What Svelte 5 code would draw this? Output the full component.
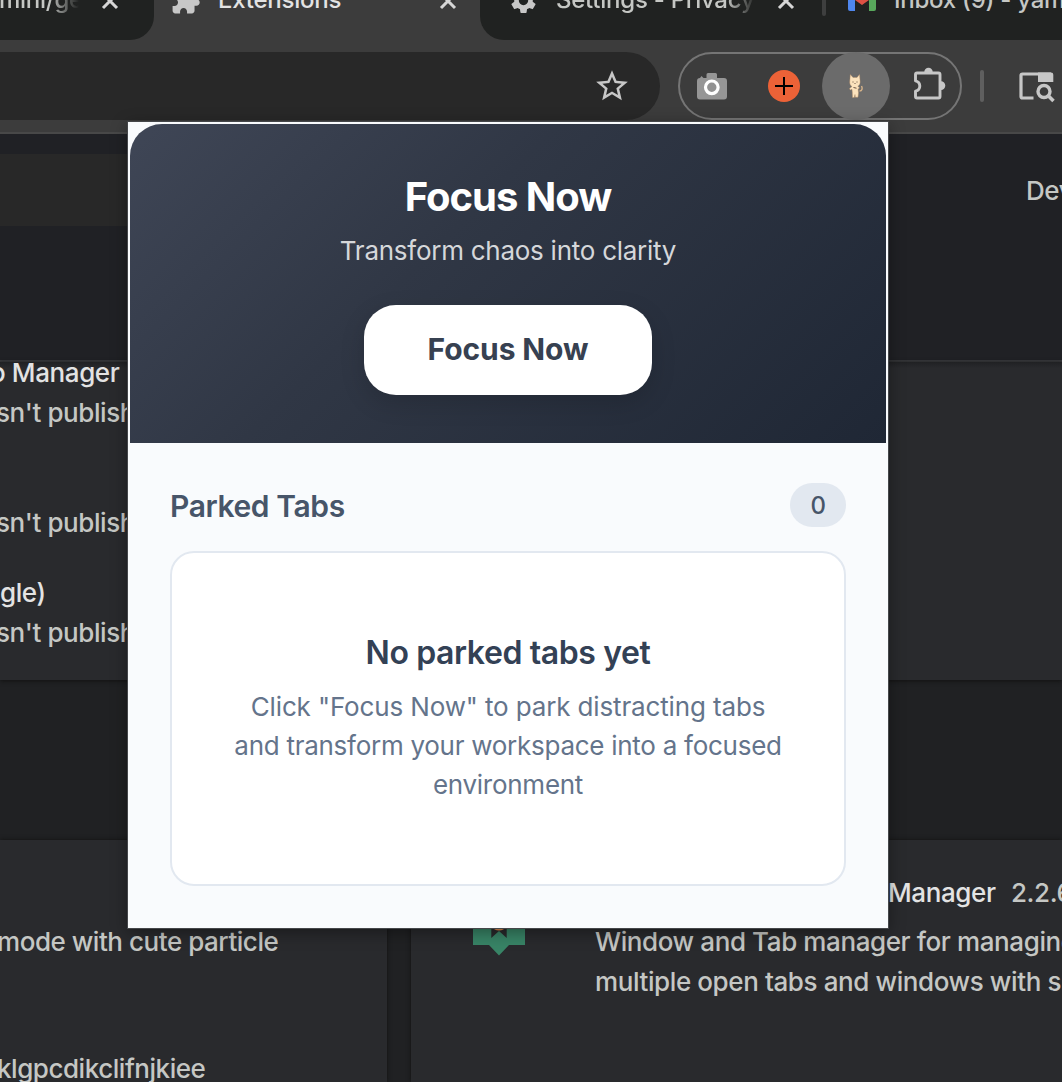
<script>
  const rows = [
    { text: 'o Manager', kind: 'name' },
    { text: "sn't publish", kind: 'desc' },
    { text: "sn't publish", kind: 'desc gap-large' },
    { text: 'gle)', kind: 'name gap-small' },
    { text: "sn't publish", kind: 'desc' }
  ];
</script>

{#snippet cross()}
  <svg class="cross" viewBox="0 0 20 20"><path d="M3 3 17 17M17 3 3 17" /></svg>
{/snippet}

<div class="screen">
  <div class="tabs">
    <div class="tab dark first">
      <span class="label fade l1">mini/ge</span>
      {@render cross()}
    </div>
    <div class="tab active">
      <svg class="tabicon" viewBox="0 0 24 24"><path d="M20.5 11H19V7c0-1.1-.9-2-2-2h-4V3.5C13 2.12 11.88 1 10.5 1S8 2.12 8 3.5V5H4c-1.1 0-1.99.9-1.99 2v3.8H3.5c1.49 0 2.7 1.21 2.7 2.7s-1.21 2.7-2.7 2.7H2V20c0 1.1.9 2 2 2h3.8v-1.5c0-1.49 1.21-2.7 2.7-2.7 1.49 0 2.7 1.21 2.7 2.7V22H17c1.1 0 2-.9 2-2v-4h1.5c1.38 0 2.5-1.12 2.5-2.5S21.88 11 20.5 11z" /></svg>
      <span class="label l2">Extensions</span>
      {@render cross()}
    </div>
    <div class="tab dark last">
      <svg class="tabicon" viewBox="0 0 24 24"><path d="M19.14 12.94c.04-.3.06-.61.06-.94 0-.32-.02-.64-.07-.94l2.03-1.58c.18-.14.23-.41.12-.61l-1.92-3.32c-.12-.22-.37-.29-.59-.22l-2.39.96c-.5-.38-1.03-.7-1.62-.94l-.36-2.54c-.04-.24-.24-.41-.48-.41h-3.84c-.24 0-.43.17-.47.41l-.36 2.54c-.59.24-1.13.57-1.62.94l-2.39-.96c-.22-.08-.47 0-.59.22L2.74 8.87c-.12.21-.08.47.12.61l2.03 1.58c-.05.3-.09.63-.09.94s.02.64.07.94l-2.03 1.58c-.18.14-.23.41-.12.61l1.92 3.32c.12.22.37.29.59.22l2.39-.96c.5.38 1.03.7 1.62.94l.36 2.54c.05.24.24.41.48.41h3.84c.24 0 .44-.17.47-.41l.36-2.54c.59-.24 1.13-.56 1.62-.94l2.39.96c.22.08.47 0 .59-.22l1.92-3.32c.12-.22.07-.47-.12-.61l-2.01-1.58zM12 15.6c-1.98 0-3.6-1.62-3.6-3.6s1.62-3.6 3.6-3.6 3.6 1.62 3.6 3.6-1.62 3.6-3.6 3.6z" /></svg>
      <span class="label fade l3">Settings - Privacy</span>
      {@render cross()}
      <i class="tabsep"></i>
      <svg class="gmail" viewBox="0 0 28 22">
        <path fill="#4f87ee" d="M0 4h7v18H2a2 2 0 0 1-2-2z" />
        <path fill="#58a85c" d="M21 4h7v16a2 2 0 0 1-2 2h-5z" />
        <path fill="#dd5144" d="M7 2l7 6 7-6v9l-7 5-7-5z" />
      </svg>
      <span class="label l4">Inbox (9) - yam</span>
    </div>
  </div>

  <div class="toolbar">
    <div class="omnibox">
      <svg viewBox="0 0 24 24"><path d="M22 9.24l-7.19-.62L12 2 9.19 8.63 2 9.24l5.46 4.73L5.82 21 12 17.27 18.18 21l-1.63-7.03L22 9.24zM12 15.4l-3.76 2.27 1-4.28-3.32-2.88 4.38-.38L12 6.1l1.71 4.04 4.38.38-3.32 2.88 1 4.28L12 15.4z" /></svg>
    </div>
    <div class="pill">
      <svg class="camera" viewBox="0 0 30 28">
        <path fill="#969696" d="M3 6 4.500 4 6.500 6h3V2.500Q9.500 1 11 1h7.500Q20 1 20 2.500V6h7q3 0 3 3v15.500q0 3-3 3H3q-3 0-3-3V9q0-3 3-3z" />
        <circle cx="14.800" cy="15.300" r="6.300" fill="#929292" stroke="#fff" stroke-width="3.200" />
      </svg>
      <svg class="plus" viewBox="0 0 32 32"><circle cx="16" cy="16" r="16" fill="#ec6237" /><path d="M16 7v18M7 16h18" stroke="#000" stroke-width="2" /></svg>
      <div class="selected">
        <svg viewBox="0 0 14 24">
          <path d="M10.500 17c3 0 3-3 2-5" fill="none" stroke="#d7b389" stroke-width="1.400" />
          <path fill="#fce3bd" stroke="#b28c62" stroke-width=".4" d="M1.300.5 4 3.500h4L10.500.5l.6 6.500c.4 3-1 4.500-2.300 5.300l1.700 1.500-1 1.200-.5-.3.500 4-.5 4.500H6.300L6 20.500l-.7 3H3.500l-.2-5.200-.3-3-1.800.8-.7-1.500L3 12.500C1 11.500.5 9.500.8 7z" />
          <path d="M3.500 8h1M7.500 8h1M5.500 9.500h1M4.500 13.500l3 .7" stroke="#594334" stroke-width=".9" />
        </svg>
      </div>
      <svg class="puzzle" viewBox="0 0 34 34"><path d="M4 6h21.500q1.500 0 1.500 1.500v22q0 1.500-1.500 1.500H4q-1.500 0-1.500-1.500V24.200c2.600-.6 4.300-2.600 4.300-5.200s-1.700-4.600-4.300-5.200V7.500Q2.500 6 4 6z" fill="none" stroke="#c7c7c7" stroke-width="2.900" stroke-linejoin="round" /><path d="M11.300 5a4.200 4.200 0 0 1 8.400 0zM28 14.300a4.300 4.300 0 0 1 0 8.600z" fill="#c7c7c7" /></svg>
    </div>
    <i class="sep"></i>
    <svg class="lens" viewBox="0 0 36 32"><path d="M14.500 26H3.500Q2 26 2 24.500v-21Q2 2 3.500 2H32" fill="none" stroke="#c7c7c7" stroke-width="3.200" /><path d="M19 .4h13q2.300 0 2.300 2.300V10H19z" fill="#c7c7c7" /><circle cx="25" cy="19.500" r="6" fill="none" stroke="#c7c7c7" stroke-width="3.400" /><path d="m29 23.500 5.500 5.500" stroke="#c7c7c7" stroke-width="3.600" /></svg>
  </div>

  <div class="pagehead">
    <div class="search"></div>
    <span class="dev">Deve</span>
  </div>

  <div class="details">
    {#each rows as row}
      <div class="row {row.kind}">{row.text}</div>
    {/each}
  </div>

  <div class="cards">
    <div class="card left">
      <p class="c1">mode with cute particle</p>
      <p class="c2">klgpcdikclifnjkiee</p>
    </div>
    <div class="card right">
      <svg viewBox="0 0 52 56"><path fill="#388466" d="M0 0h52v45H36L26 55.500 16 45H0z" /><path fill="#29292b" d="M18.300 20h15.400v18L26 31l-7.700 7z" /><ellipse cx="26" cy="27" rx="6" ry="3.600" fill="#dc8a4d" /></svg>
      <div class="info">
        <div class="head"><span class="m">Manager</span><span class="v">2.2.6</span></div>
        <p class="w1">Window and Tab manager for managing</p>
        <p class="w2">multiple open tabs and windows with s</p>
      </div>
    </div>
  </div>

  <main class="popup">
    <header>
      <h1>Focus Now</h1>
      <p>Transform chaos into clarity</p>
      <button>Focus Now</button>
    </header>
    <section>
      <div class="title"><h2>Parked Tabs</h2><b>0</b></div>
      <div class="empty">
        <h3>No parked tabs yet</h3>
        <p><span class="lead">Click "Focus Now" to park distracting tabs</span><br />and transform your workspace into a focused<br />environment</p>
      </div>
    </section>
  </main>
</div>

<style>
  :global(body) { margin: 0; overflow: hidden; }
  * { box-sizing: border-box; }
  p, h1, h2, h3 { margin: 0; }
  svg { display: block; flex: none; }
  .screen { position: relative; width: 1062px; height: 1082px; overflow: hidden; background: #202123; font-family: Inter, "Liberation Sans", sans-serif; font-size: 26px; font-weight: 450; letter-spacing: -.4px; color: #c5c7c4; white-space: nowrap; }

  .tabs { height: 40px; display: flex; background: #3c3c3c; overflow: hidden; }
  .tab { height: 64px; margin-top: -32px; display: flex; align-items: center; flex: none; }
  .tab.dark { background: #202221; height: 72px; padding-bottom: 8px; }
  .tab.first { width: 154px; border-radius: 0 0 24px 0; }
  .tab.active { width: 326px; padding-left: 16px; color: #e3e3e3; }
  .tab.last { width: 582px; border-radius: 0 0 0 24px; padding-left: 28px; }
  .tabicon { width: 31px; height: 31px; fill: #c7c7c7; margin-top: 1px; }
  .label { font-size: 24px; line-height: 32px; flex: none; overflow: hidden; letter-spacing: -.25px; }
  .fade { -webkit-mask-image: linear-gradient(90deg, #000 calc(100% - 30px), transparent); mask-image: linear-gradient(90deg, #000 calc(100% - 30px), transparent); }
  .l1 { width: 80px; margin-left: -1px; margin-right: 21px; }
  .l2 { width: 220px; margin-left: 17px; }
  .l3 { width: 200px; margin-left: 17px; margin-right: 20px; }
  .l4 { margin-left: 18px; }
  .cross { width: 20px; height: 20px; fill: none; stroke: #d6d6d6; stroke-width: 3; margin-top: 1px; }
  .tabsep { width: 4px; height: 32px; border-radius: 2px; background: #3e3f3f; margin-left: 26px; flex: none; }
  .gmail { width: 28px; height: 22px; margin-left: 22px; }

  .toolbar { height: 94px; background: #3c3c3c; border-bottom: 2px solid #484848; padding: 12px 0; display: flex; }
  .omnibox { width: 660px; height: 68px; background: #282828; border-radius: 0 34px 34px 0; display: flex; align-items: center; justify-content: flex-end; padding-right: 29px; flex: none; }
  .omnibox svg { width: 38px; height: 38px; fill: #c7c7c7; margin-top: -1px; }
  .pill { width: 284px; height: 68px; margin-left: 18px; border: 2px solid #757575; border-radius: 34px; display: flex; align-items: center; padding-left: 17px; flex: none; }
  .camera { width: 30px; height: 28px; }
  .plus { width: 32px; height: 32px; margin-left: 41px; }
  .selected { width: 68px; height: 68px; border-radius: 50%; background: #6b6b6b; margin-left: 22px; flex: none; display: flex; align-items: center; justify-content: center; }
  .selected svg { width: 14px; height: 24px; }
  .puzzle { width: 34px; height: 34px; margin: -4px 0 0 23px; }
  .sep { width: 4px; height: 32px; border-radius: 2px; background: #5f5f5f; margin: 18px 0 0 18px; flex: none; }
  .lens { width: 36px; height: 32px; margin: 20px 0 0 35px; }

  .pagehead { height: 228px; background: #202125; border-bottom: 2px solid #38393c; display: flex; justify-content: space-between; padding-top: 20px; }
  .search { width: 600px; height: 72px; background: #282828; }
  .dev { width: 36px; line-height: 74px; overflow: hidden; }

  .details { height: 318px; background: linear-gradient(#202123, #292a2d 6px); box-shadow: 0 1px 4px #111; overflow: hidden; }
  .row { height: 40px; line-height: 40px; margin-left: -4px; }
  .row:first-child { margin-top: -9px; margin-left: -10px; }
  .name { color: #e3e3e3; }
  .gap-large { margin-top: 70px; }
  .gap-small { margin-top: 30px; margin-left: 0; }

  .cards { margin-top: 160px; height: 242px; display: flex; gap: 24px; }
  .card { background: #292a2d; box-shadow: 0 0 4px #111; line-height: 40px; flex: none; }
  .left { width: 387px; padding-top: 82px; }
  .left p { margin-left: -3px; letter-spacing: -.46px; }
  .left .c2 { margin-top: 87px; }
  .right { width: 651px; padding: 33px 0 0 62px; display: flex; }
  .right svg { width: 52px; height: 56px; margin-top: 27px; }
  .info { margin-left: 70px; }
  .head { display: flex; padding-left: 293px; margin-bottom: 9px; }
  .head .m { color: #e3e3e3; width: 123px; }

  .popup { position: absolute; left: 128px; top: 122px; width: 760px; height: 806px; background: #f9fbfd; padding: 2px; box-shadow: 0 0 0 1px #45474a, 0 4px 16px rgba(0, 0, 0, .4); }
  header { height: 319px; border-radius: 32px 32px 0 0; background: linear-gradient(135deg, #3f4656 0%, #303745 40%, #1f2735 100%); display: flex; flex-direction: column; align-items: center; padding-top: 48px; }
  h1 { font-size: 40px; line-height: 50px; font-weight: 700; letter-spacing: -1px; color: #fff; }
  header p { line-height: 40px; margin-top: 9px; color: #d5d7da; font-weight: 400; letter-spacing: -.26px; }
  button { width: 288px; height: 90px; margin-top: 34px; padding: 0 0 2px; border: 0; border-radius: 32px; background: #fff; color: #374151; font: 700 30px Inter, sans-serif; letter-spacing: -.1px; box-shadow: 0 8px 24px rgba(0, 0, 0, .15); }
  section { padding: 40px; }
  .title { display: flex; justify-content: space-between; align-items: center; height: 44px; }
  h2 { font-size: 30px; font-weight: 600; line-height: 44px; letter-spacing: -.4px; color: #475569; margin-top: 2px; }
  b { width: 56px; height: 44px; border-radius: 24px; background: #e2e8f0; color: #475569; font-size: 24px; font-weight: 550; line-height: 45px; text-align: center; }
  .empty { height: 335px; margin-top: 24px; border: 2px solid #e2e8f0; border-radius: 24px; background: #fff; text-align: center; padding-top: 80px; }
  h3 { font-size: 32px; font-weight: 600; line-height: 40px; letter-spacing: -.4px; color: #334155; }
  .empty p { color: #64748b; line-height: 39px; margin-top: 14px; font-weight: 400; letter-spacing: -.27px; }
  .lead { letter-spacing: -.14px; }
</style>
